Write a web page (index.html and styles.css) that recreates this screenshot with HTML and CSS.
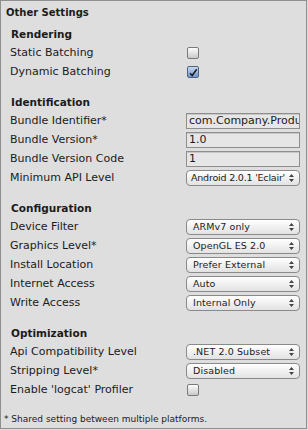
FILE: index.html
```html
<!DOCTYPE html>
<html lang="en">
<head>
    <meta charset="UTF-8">
    <link rel="stylesheet" href="styles.css">
</head>
<body>
    <div class="panel">
        <div class="panel-title">Other Settings</div>

        <div class="section first">
            <div class="section-head">Rendering</div>
            <div class="row">
                <span class="label">Static Batching</span>
                <span class="check"></span>
            </div>
            <div class="row">
                <span class="label">Dynamic Batching</span>
                <span class="check on">
                    <svg width="12" height="12" viewBox="0 0 12 12"><path d="M2.5 6.2 L5 9 L10.5 1.5" fill="none" stroke="#1c1c1c" stroke-width="1.8"/></svg>
                </span>
            </div>
        </div>

        <div class="section">
            <div class="section-head">Identification</div>
            <div class="row">
                <span class="label">Bundle Identifier*</span>
                <span class="field">com.Company.Produ</span>
            </div>
            <div class="row">
                <span class="label">Bundle Version*</span>
                <span class="field">1.0</span>
            </div>
            <div class="row">
                <span class="label">Bundle Version Code</span>
                <span class="field">1</span>
            </div>
            <div class="row">
                <span class="label">Minimum API Level</span>
                <span class="popup tight">Android 2.0.1 'Eclair'<svg class="arrows" width="5" height="8" viewBox="0 0 5 8"><path d="M0 3 L2.5 0 L5 3 Z M0 5 L2.5 8 L5 5 Z" fill="#444"/></svg></span>
            </div>
        </div>

        <div class="section">
            <div class="section-head">Configuration</div>
            <div class="row">
                <span class="label">Device Filter</span>
                <span class="popup">ARMv7 only<svg class="arrows" width="5" height="8" viewBox="0 0 5 8"><path d="M0 3 L2.5 0 L5 3 Z M0 5 L2.5 8 L5 5 Z" fill="#444"/></svg></span>
            </div>
            <div class="row">
                <span class="label">Graphics Level*</span>
                <span class="popup">OpenGL ES 2.0<svg class="arrows" width="5" height="8" viewBox="0 0 5 8"><path d="M0 3 L2.5 0 L5 3 Z M0 5 L2.5 8 L5 5 Z" fill="#444"/></svg></span>
            </div>
            <div class="row">
                <span class="label">Install Location</span>
                <span class="popup">Prefer External<svg class="arrows" width="5" height="8" viewBox="0 0 5 8"><path d="M0 3 L2.5 0 L5 3 Z M0 5 L2.5 8 L5 5 Z" fill="#444"/></svg></span>
            </div>
            <div class="row">
                <span class="label">Internet Access</span>
                <span class="popup">Auto<svg class="arrows" width="5" height="8" viewBox="0 0 5 8"><path d="M0 3 L2.5 0 L5 3 Z M0 5 L2.5 8 L5 5 Z" fill="#444"/></svg></span>
            </div>
            <div class="row">
                <span class="label">Write Access</span>
                <span class="popup">Internal Only<svg class="arrows" width="5" height="8" viewBox="0 0 5 8"><path d="M0 3 L2.5 0 L5 3 Z M0 5 L2.5 8 L5 5 Z" fill="#444"/></svg></span>
            </div>
        </div>

        <div class="section">
            <div class="section-head">Optimization</div>
            <div class="row">
                <span class="label">Api Compatibility Level</span>
                <span class="popup">.NET 2.0 Subset<svg class="arrows" width="5" height="8" viewBox="0 0 5 8"><path d="M0 3 L2.5 0 L5 3 Z M0 5 L2.5 8 L5 5 Z" fill="#444"/></svg></span>
            </div>
            <div class="row">
                <span class="label">Stripping Level*</span>
                <span class="popup">Disabled<svg class="arrows" width="5" height="8" viewBox="0 0 5 8"><path d="M0 3 L2.5 0 L5 3 Z M0 5 L2.5 8 L5 5 Z" fill="#444"/></svg></span>
            </div>
            <div class="row">
                <span class="label">Enable 'logcat' Profiler</span>
                <span class="check"></span>
            </div>
        </div>

        <div class="note">* Shared setting between multiple platforms.</div>
    </div>
</body>
</html>
```

FILE: styles.css
```css
*{
    padding: 0;
    margin: 0;
    box-sizing: border-box;
}
body{
    background: #dedede;
    font-family: "DejaVu Sans", sans-serif;
    font-size: 11px;
    color: #1b1b1b;
}
.panel{
    width: 307px;
    height: 429px;
    background: #dedede;
    border: 1px solid #8f8f8f;
    padding: 3px 0 0 0;
}
.panel-title{
    font-weight: bold;
    font-size: 10px;
    height: 18px;
    line-height: 18px;
    padding-left: 5px;
}
.section{
    margin-top: 12px;
    padding-left: 9px;
}
.section.first{
    margin-top: 3px;
}
.section-head{
    font-weight: bold;
    font-size: 10.5px;
    height: 18px;
    line-height: 18px;
    padding-left: 1px;
}
.row{
    height: 19px;
    display: flex;
    align-items: center;
}
.label{
    width: 176px;
    white-space: nowrap;
}
.check{
    width: 12px;
    height: 12px;
    margin-left: 1px;
    border: 1px solid #7a7a7a;
    border-radius: 2px;
    background: linear-gradient(#fdfdfd, #c9c9c9);
    display: flex;
}
.check.on{
    background: linear-gradient(#c8d9f2, #6f94cc);
    border-color: #51627d;
}
.field{
    width: 114px;
    height: 16px;
    line-height: 14px;
    padding-left: 2px;
    border: 1px solid #8e8e8e;
    background: #e6e6e6;
    box-shadow: inset 0 1px 0 #c8c8c8;
    overflow: hidden;
    white-space: nowrap;
}
.popup{
    position: relative;
    width: 114px;
    height: 16px;
    line-height: 14px;
    padding-left: 6px;
    border: 1px solid #8a8a8a;
    border-radius: 4px;
    background: linear-gradient(#ffffff, #e2e2e2);
    font-size: 9.5px;
    letter-spacing: 0.1px;
    white-space: nowrap;
    overflow: hidden;
}
.popup.tight{
    padding-left: 4px;
    letter-spacing: -0.2px;
}
.arrows{
    position: absolute;
    right: 5px;
    top: 3px;
}
.note{
    margin-top: 15px;
    padding-left: 3px;
    font-size: 9px;
}
```
